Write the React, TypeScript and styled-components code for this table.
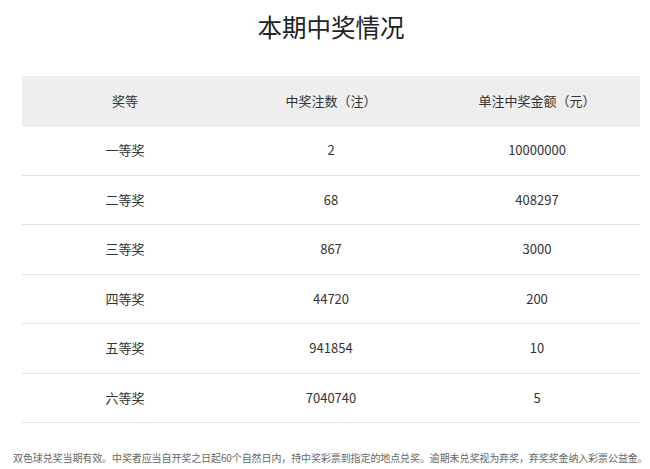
import React from "react";
import styled, { createGlobalStyle } from "styled-components";

const GlobalStyle = createGlobalStyle`
  html, body { margin: 0; padding: 0; background: #ffffff; }
  body { font-family: "Noto Sans CJK SC", "Microsoft YaHei", sans-serif; color: #333333; }
`;

const Page = styled.div`
  width: 650px;
  display: flex;
  flex-direction: column;
`;

const Section = styled.div`
  margin: 0 10px 0 22px;
  display: flex;
  flex-direction: column;
`;

const Title = styled.h1`
  margin: 10px 0 32px;
  font-size: 24.5px;
  line-height: 34px;
  font-weight: 400;
  text-align: center;
  color: #222222;
`;

const Table = styled.div`
  display: flex;
  flex-direction: column;
`;

const Row = styled.div<{ $head?: boolean }>`
  display: grid;
  grid-template-columns: repeat(3, 1fr);
  align-items: center;
  box-sizing: border-box;
  height: ${(p) => (p.$head ? "50px" : "49.5px")};
  background: ${(p) => (p.$head ? "#eeeeee" : "#ffffff")};
  border-bottom: 1px solid #e3e3e3;
`;

const Cell = styled.div`
  text-align: center;
  font-size: 13px;
  line-height: 18px;
  color: #333333;
`;

const Note = styled.p`
  margin: 28px 0 0 13px;
  font-size: 10px;
  line-height: 14px;
  letter-spacing: -0.1px;
  color: #666666;
  white-space: nowrap;
`;

const rows: [string, string, string][] = [
  ["一等奖", "2", "10000000"],
  ["二等奖", "68", "408297"],
  ["三等奖", "867", "3000"],
  ["四等奖", "44720", "200"],
  ["五等奖", "941854", "10"],
  ["六等奖", "7040740", "5"],
];

export default function App() {
  return (
    <>
      <GlobalStyle />
      <Page>
        <Section>
          <Title>本期中奖情况</Title>
          <Table>
            <Row $head>
              <Cell>奖等</Cell>
              <Cell>中奖注数（注）</Cell>
              <Cell>单注中奖金额（元）</Cell>
            </Row>
            {rows.map((r) => (
              <Row key={r[0]}>
                <Cell>{r[0]}</Cell>
                <Cell>{r[1]}</Cell>
                <Cell>{r[2]}</Cell>
              </Row>
            ))}
          </Table>
        </Section>
        <Note>
          双色球兑奖当期有效。中奖者应当自开奖之日起60个自然日内，持中奖彩票到指定的地点兑奖。逾期未兑奖视为弃奖，弃奖奖金纳入彩票公益金。
        </Note>
      </Page>
    </>
  );
}
